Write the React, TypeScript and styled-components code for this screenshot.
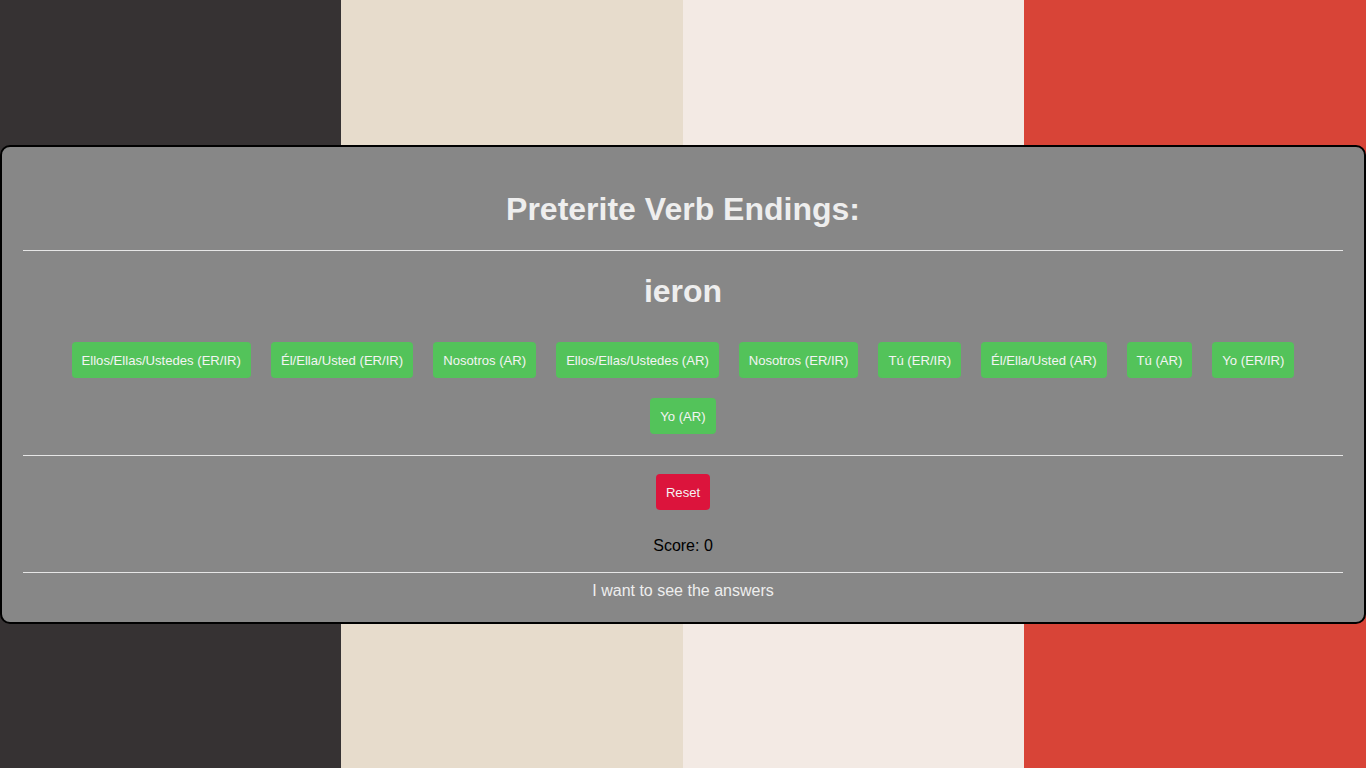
import React from "react";
import styled, { createGlobalStyle } from "styled-components";

const GlobalStyle = createGlobalStyle`
  html, body { margin: 0; padding: 0; }
  body {
    font-family: "Liberation Sans", Arial, sans-serif;
    min-height: 100vh;
    background: linear-gradient(
      to right,
      #363233 0%, #363233 25%,
      #e7dccc 25%, #e7dccc 50%,
      #f3eae4 50%, #f3eae4 75%,
      #d84437 75%, #d84437 100%
    );
  }
  #root { min-height: 100vh; display: flex; align-items: center; }
`;

const Card = styled.div`
  box-sizing: border-box;
  width: 100%;
  background: #878787;
  border: 2px solid #000;
  border-radius: 10px;
  padding: 0 21px 22px;
  display: flex;
  flex-direction: column;
  align-items: stretch;
  text-align: center;
`;

const Heading = styled.h1<{ $top: number }>`
  margin: ${(p) => p.$top}px 0 0;
  font-size: 32px;
  line-height: 37px;
  font-weight: bold;
  color: #eeeeee;
`;

const Divider = styled.div<{ $top: number }>`
  margin-top: ${(p) => p.$top}px;
  height: 0;
  border-top: 1px solid #e6e6e6;
`;

const Options = styled.div`
  margin-top: 22px;
  display: flex;
  flex-wrap: wrap;
  justify-content: center;
`;

const Choice = styled.button<{ $bg: string }>`
  margin: 10px;
  padding: 2px 10px 0;
  height: 36px;
  border: none;
  border-radius: 4px;
  background: ${(p) => p.$bg};
  color: #f4f4f4;
  font-family: "Liberation Sans", Arial, sans-serif;
  font-size: 13.1px;
  line-height: 16px;
  cursor: pointer;
`;

const ResetRow = styled.div`
  margin-top: 18px;
  display: flex;
  justify-content: center;
`;

const ResetButton = styled(Choice)`
  margin: 0;
`;

const Score = styled.div`
  margin-top: 27px;
  font-size: 16px;
  line-height: 18px;
  color: #000;
`;

const Answers = styled.div`
  margin-top: 9px;
  font-size: 16px;
  line-height: 18px;
  color: #eeeeee;
`;

const options = [
  "Ellos/Ellas/Ustedes (ER/IR)",
  "Él/Ella/Usted (ER/IR)",
  "Nosotros (AR)",
  "Ellos/Ellas/Ustedes (AR)",
  "Nosotros (ER/IR)",
  "Tú (ER/IR)",
  "Él/Ella/Usted (AR)",
  "Tú (AR)",
  "Yo (ER/IR)",
  "Yo (AR)",
];

export default function App() {
  return (
    <>
      <GlobalStyle />
      <Card>
        <Heading $top={44}>Preterite Verb Endings:</Heading>
        <Divider $top={22} />
        <Heading $top={22}>ieron</Heading>
        <Options>
          {options.map((o) => (
            <Choice key={o} $bg="#53c35a">
              {o}
            </Choice>
          ))}
        </Options>
        <Divider $top={11} />
        <ResetRow>
          <ResetButton $bg="#dc143c">Reset</ResetButton>
        </ResetRow>
        <Score>Score: 0</Score>
        <Divider $top={17} />
        <Answers>I want to see the answers</Answers>
      </Card>
    </>
  );
}
